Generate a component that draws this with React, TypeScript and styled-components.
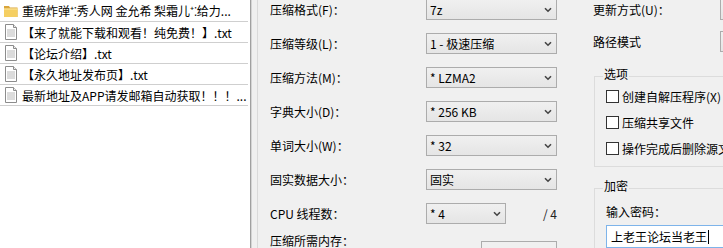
import React from "react";
import styled, { createGlobalStyle } from "styled-components";

const GlobalStyle = createGlobalStyle`
  html, body {
    margin: 0;
    padding: 0;
    background: #f0f0f0;
  }
  body {
    font-family: "Noto Sans CJK SC", "Noto Sans", sans-serif;
    font-size: 12px;
    color: #000;
  }
`;

const Screen = styled.div`
  display: flex;
  width: 723px;
  height: 248px;
  overflow: hidden;
  background: #f0f0f0;
`;

const FileList = styled.div`
  flex: 0 0 250px;
  background: #fff;
  border-right: 1px solid #a0a0a0;
  box-shadow: 1px 0 0 #d4d4d4;
  padding-top: 1px;
`;

const FileRow = styled.div`
  display: flex;
  align-items: center;
  height: 20px;
  border-bottom: 1px solid #cfcfcf;
  margin-right: 2px;
  padding-left: 3px;
  gap: 3px;
  white-space: nowrap;
  overflow: hidden;
`;

const FileName = styled.span`
  min-width: 0;
  overflow: hidden;
  text-overflow: ellipsis;
`;

const IconBox = styled.span`
  display: flex;
  width: 16px;
  justify-content: center;
  flex: 0 0 16px;
`;

const Splitter = styled.div`
  flex: 0 0 6px;
  border-right: 1px solid #dadada;
`;

const Dialog = styled.div`
  display: flex;
  flex: 1 0 auto;
`;

const ParamColumn = styled.div`
  flex: 0 0 287px;
  padding-left: 12px;
`;

const ParamGrid = styled.div`
  display: grid;
  grid-template-columns: 156px 131px;
  grid-auto-rows: 21px;
  row-gap: 13px;
  margin-top: -1px;
  align-items: center;
`;

const Label = styled.span`
  line-height: 16px;
  white-space: nowrap;
`;

const Combo = styled.div<{ $width?: number }>`
  box-sizing: border-box;
  display: flex;
  align-items: center;
  justify-content: space-between;
  width: ${(p) => (p.$width ? `${p.$width}px` : "100%")};
  height: 21px;
  padding: 0 4px 0 3px;
  border: 1px solid #acacac;
  background: linear-gradient(#f0f0f0, #e5e5e5);
  white-space: nowrap;
`;

const ComboCell = styled.div`
  display: flex;
  align-items: center;
  justify-content: space-between;
`;

const Total = styled.span`
  color: #222;
`;

const MemoryRow = styled.div`
  display: flex;
  align-items: flex-start;
  margin-top: 9px;
`;

const MemoryLabel = styled(Label)`
  flex: 0 0 211px;
`;

const ReadBox = styled.div`
  box-sizing: border-box;
  width: 76px;
  height: 21px;
  margin-top: 8px;
  padding: 0 4px;
  line-height: 19px;
  border: 1px solid #acacac;
  background: #f0f0f0;
`;

const SideColumn = styled.div`
  flex: 0 0 auto;
  margin-left: 36px;
  margin-top: -1px;
`;

const SideRow = styled.div`
  display: flex;
  align-items: center;
  height: 21px;
  & + & {
    margin-top: 11px;
  }
`;

const SideLabel = styled(Label)`
  flex: 0 0 127px;
`;

const GroupBox = styled.div<{ $top: number }>`
  width: 160px;
  margin-top: ${(p) => p.$top}px;
  margin-left: 1px;
  padding: 0 0 5px 11px;
  border: 1px solid #dcdcdc;
`;

const GroupTitle = styled.div`
  width: fit-content;
  margin: -11px 0 0 -3px;
  padding: 0 1px;
  line-height: 16px;
  background: #f0f0f0;
`;

const CheckRow = styled.label`
  display: flex;
  align-items: center;
  gap: 3px;
  height: 26px;
  white-space: nowrap;
  &:first-of-type {
    margin-top: 1px;
  }
`;

const CheckBox = styled.span`
  box-sizing: border-box;
  flex: 0 0 13px;
  height: 13px;
  border: 1px solid #333;
  background: #fff;
`;

const FieldLabel = styled(Label)`
  display: block;
  margin-top: 10px;
`;

const PasswordInput = styled.div`
  box-sizing: border-box;
  display: flex;
  align-items: center;
  width: 200px;
  height: 23px;
  margin-top: 5px;
  padding-left: 4px;
  border: 1px solid #7eb4ea;
  background: #fff;
  white-space: nowrap;
`;

const Caret = styled.span`
  display: inline-block;
  width: 0;
  height: 14px;
  margin-left: 1px;
  border-left: 1px solid #000;
`;

const FolderIcon = () => (
  <svg width="16" height="16" viewBox="0 0 16 16">
    <path d="M1 3h5l1 1.5h7.5V14H1z" fill="#d9a53b" />
    <path d="M1 5.5h13.5V14H1z" fill="#f5cf62" />
    <path d="M1 5.5h13.5v1H1z" fill="#fbe4a0" />
  </svg>
);

const TextIcon = () => (
  <svg width="14" height="16" viewBox="0 0 14 16">
    <path d="M1.5 0.5h8l3 3v12h-11z" fill="#fff" stroke="#8c8c8c" />
    <path d="M9.5 0.5v3h3" fill="#eee" stroke="#8c8c8c" />
    <path d="M3 6h8M3 8h8M3 10h8M3 12h8" stroke="#b8b8b8" />
  </svg>
);

const Chevron = () => (
  <svg width="8" height="6" viewBox="0 0 8 6">
    <path d="M1 1.2l3 3 3-3" fill="none" stroke="#444" strokeWidth="1.6" />
  </svg>
);

const files = [
  { name: "重磅炸弹⁺⁚秀人网 金允希 梨霜儿⁺⁚给力...", folder: true },
  { name: "【来了就能下载和观看！纯免费！】.txt", folder: false },
  { name: "【论坛介绍】.txt", folder: false },
  { name: "【永久地址发布页】.txt", folder: false },
  { name: "最新地址及APP请发邮箱自动获取！！！...", folder: false },
];

const params = [
  { label: "压缩格式(F)：", value: "7z" },
  { label: "压缩等级(L)：", value: "1 - 极速压缩" },
  { label: "压缩方法(M)：", value: "* LZMA2" },
  { label: "字典大小(D)：", value: "* 256 KB" },
  { label: "单词大小(W)：", value: "* 32" },
  { label: "固实数据大小：", value: "固实" },
];

const options = ["创建自解压程序(X)", "压缩共享文件", "操作完成后删除源文件"];

export default function App() {
  return (
    <>
      <GlobalStyle />
      <Screen>
        <FileList>
          {files.map((f) => (
            <FileRow key={f.name}>
              <IconBox>{f.folder ? <FolderIcon /> : <TextIcon />}</IconBox>
              <FileName>{f.name}</FileName>
            </FileRow>
          ))}
        </FileList>
        <Splitter />
        <Dialog>
          <ParamColumn>
            <ParamGrid>
              {params.map((p) => (
                <React.Fragment key={p.label}>
                  <Label>{p.label}</Label>
                  <Combo>
                    <span>{p.value}</span>
                    <Chevron />
                  </Combo>
                </React.Fragment>
              ))}
              <Label>CPU 线程数：</Label>
              <ComboCell>
                <Combo $width={80}>
                  <span>* 4</span>
                  <Chevron />
                </Combo>
                <Total>/ 4</Total>
              </ComboCell>
            </ParamGrid>
            <MemoryRow>
              <MemoryLabel>压缩所需内存：</MemoryLabel>
              <ReadBox>35 MB</ReadBox>
            </MemoryRow>
          </ParamColumn>
          <SideColumn>
            <SideRow>
              <SideLabel>更新方式(U)：</SideLabel>
              <Combo $width={160} />
            </SideRow>
            <SideRow>
              <SideLabel>路径模式</SideLabel>
              <Combo $width={160} />
            </SideRow>
            <GroupBox $top={24}>
              <GroupTitle>选项</GroupTitle>
              {options.map((o) => (
                <CheckRow key={o}>
                  <CheckBox />
                  <span>{o}</span>
                </CheckRow>
              ))}
            </GroupBox>
            <GroupBox $top={21}>
              <GroupTitle>加密</GroupTitle>
              <FieldLabel>输入密码：</FieldLabel>
              <PasswordInput>
                上老王论坛当老王
                <Caret />
              </PasswordInput>
            </GroupBox>
          </SideColumn>
        </Dialog>
      </Screen>
    </>
  );
}
